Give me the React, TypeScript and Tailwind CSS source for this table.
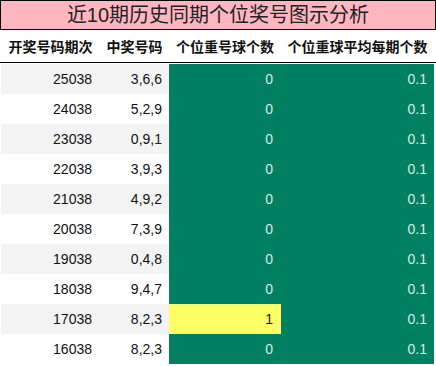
import React from 'react';

type Row = { issue: string; nums: string; repeat: number; avg: string };

const ROWS: Row[] = [
  { issue: '25038', nums: '3,6,6', repeat: 0, avg: '0.1' },
  { issue: '24038', nums: '5,2,9', repeat: 0, avg: '0.1' },
  { issue: '23038', nums: '0,9,1', repeat: 0, avg: '0.1' },
  { issue: '22038', nums: '3,9,3', repeat: 0, avg: '0.1' },
  { issue: '21038', nums: '4,9,2', repeat: 0, avg: '0.1' },
  { issue: '20038', nums: '7,3,9', repeat: 0, avg: '0.1' },
  { issue: '19038', nums: '0,4,8', repeat: 0, avg: '0.1' },
  { issue: '18038', nums: '9,4,7', repeat: 0, avg: '0.1' },
  { issue: '17038', nums: '8,2,3', repeat: 1, avg: '0.1' },
  { issue: '16038', nums: '8,2,3', repeat: 0, avg: '0.1' },
];

const grid = 'grid grid-cols-[99px_69px_112px_153px]';

const App: React.FC = () => {
  return (
    <div
      className="w-[436px] h-[366px] bg-white overflow-hidden"
      style={{ fontFamily: '"Liberation Sans", "Noto Sans CJK SC", sans-serif' }}
    >
      {/* Title */}
      <div className="h-[30px] border border-black bg-[#ffb6c1] flex items-center justify-center text-[20px] leading-none text-[#222]">
        近10期历史同期个位奖号图示分析
      </div>

      {/* Header */}
      <div className={`${grid} h-[33px] px-[1px] items-center pt-[2px] text-[14px] font-bold text-[#111] border-b border-black`}>
        <div className="text-center">开奖号码期次</div>
        <div className="text-center">中奖号码</div>
        <div className="text-center">个位重号球个数</div>
        <div className="text-center">个位重球平均每期个数</div>
      </div>

      {/* Rows */}
      <div className="pt-[1px] px-[1px]">
        {ROWS.map((r, i) => (
          <div key={r.issue} className={`${grid} h-[30px] text-[14px]`}>
            <div className={`${i % 2 === 0 ? 'bg-[#f3f3f3]' : 'bg-white'} flex items-center justify-end pr-[8px] text-[#111]`}>
              {r.issue}
            </div>
            <div className={`${i % 2 === 0 ? 'bg-[#f3f3f3]' : 'bg-white'} flex items-center justify-end pr-[7px] text-[#111]`}>
              {r.nums}
            </div>
            <div
              className={`${r.repeat > 0 ? 'bg-[#ffff66] text-[#111]' : 'bg-[#008060] text-[#dde8e3]'} flex items-center justify-end pr-[8px]`}
            >
              {r.repeat}
            </div>
            <div className="bg-[#008060] text-[#dde8e3] flex items-center justify-end pr-[7px]">
              {r.avg}
            </div>
          </div>
        ))}
      </div>
    </div>
  );
};

export default App;
